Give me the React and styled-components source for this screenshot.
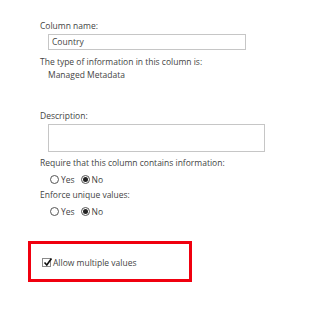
import styled, { createGlobalStyle } from "styled-components";

const GlobalStyle = createGlobalStyle`
  html, body {
    margin: 0;
    padding: 0;
    background: #fff;
  }
  body {
    font-family: "Open Sans", "Liberation Sans", sans-serif;
    font-size: 8.5px;
    color: #444;
  }
`;

const Page = styled.div`
  width: 316px;
  height: 320px;
  padding: 20px 0 0 28px;
  box-sizing: border-box;
`;

const Field = styled.div`
  padding-left: 12px;
`;

const Label = styled.div`
  height: 12px;
  line-height: 12px;
  margin-top: ${(p) => p.gap || 0}px;
  white-space: nowrap;
`;

const Value = styled.div`
  height: 12px;
  line-height: 12px;
  padding-left: 8px;
  margin-top: 1px;
`;

const TextBox = styled.div`
  margin: 2px 0 0 8px;
  width: ${(p) => p.width}px;
  height: ${(p) => p.height}px;
  border: 1px solid #c6c6c6;
  box-sizing: border-box;
  padding-left: 3px;
  line-height: ${(p) => p.height - 2}px;
  color: #444;
`;

const RadioRow = styled.div`
  display: flex;
  align-items: center;
  height: 12px;
  margin-top: 4px;
  padding-left: 10px;
`;

const RadioOption = styled.label`
  display: flex;
  align-items: center;
  margin-right: 6px;
`;

const RadioCircle = styled.span`
  width: 9px;
  height: 9px;
  border: 1px solid #555;
  border-radius: 50%;
  box-sizing: border-box;
  margin-right: 2px;
  display: flex;
  align-items: center;
  justify-content: center;

  &::after {
    content: "";
    width: 5px;
    height: 5px;
    border-radius: 50%;
    background: ${(p) => (p.checked ? "#222" : "transparent")};
  }
`;

const Highlight = styled.div`
  margin-top: 24px;
  width: 164px;
  height: 41px;
  border: 3px solid #f0000f;
  box-sizing: border-box;
  padding: 12px 0 0 11px;
`;

const CheckRow = styled.label`
  display: flex;
  align-items: center;
  height: 12px;
`;

const CheckBox = styled.span`
  width: 9px;
  height: 9px;
  border: 1px solid #8a8a8a;
  box-sizing: border-box;
  margin-right: 2px;
  position: relative;

  svg {
    position: absolute;
    left: 0;
    top: -2px;
  }
`;

function Radios({ value }) {
  return (
    <RadioRow>
      <RadioOption>
        <RadioCircle checked={value === "yes"} />
        Yes
      </RadioOption>
      <RadioOption>
        <RadioCircle checked={value === "no"} />
        No
      </RadioOption>
    </RadioRow>
  );
}

export default function App() {
  return (
    <Page>
      <GlobalStyle />
      <Field>
        <Label>Column name:</Label>
        <TextBox width={198} height={16}>Country</TextBox>
        <Label gap={6}>The type of information in this column is:</Label>
        <Value>Managed Metadata</Value>
        <Label gap={29}>Description:</Label>
        <TextBox width={217} height={28} />
        <Label gap={5}>Require that this column contains information:</Label>
        <Radios value="no" />
        <Label gap={4}>Enforce unique values:</Label>
        <Radios value="no" />
      </Field>
      <Highlight>
        <CheckRow>
          <CheckBox>
            <svg width="10" height="10" viewBox="0 0 10 10">
              <path d="M1.5 5.5 L3.8 8 L8.5 1.5" fill="none" stroke="#111" strokeWidth="1.6" />
            </svg>
          </CheckBox>
          Allow multiple values
        </CheckRow>
      </Highlight>
    </Page>
  );
}
